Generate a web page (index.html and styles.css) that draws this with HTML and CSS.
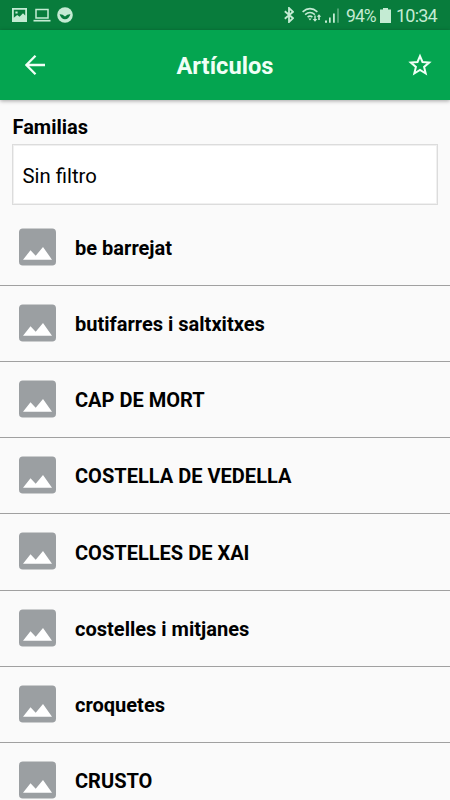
FILE: index.html
```html
<!DOCTYPE html>
<html lang="es">
<head>
<meta charset="utf-8">
<title>Artículos</title>
<link rel="stylesheet" href="styles.css">
</head>
<body>
<svg class="defs" width="0" height="0" aria-hidden="true">
  <symbol id="photo" viewBox="0 0 37 37">
    <rect width="37" height="37" rx="3.8" fill="#9b9fa2"/>
    <path d="M4 31.2 11.5 21.8 16.7 27.2 24 18.5 33 31.2Z" fill="#fff"/>
  </symbol>
</svg>
<header class="status">
  <div class="status-left">
    <svg width="15" height="14" viewBox="0 0 15 14"><path fill="currentColor" fill-rule="evenodd" d="M0 0H15V14H0ZM1.8 1.8V9.8L5.2 7 7.6 8.8 11 5.2 13.2 7.6V1.8ZM3.4 3.6H5.6V5.6H3.4Z"/></svg>
    <svg width="18" height="14" viewBox="0 0 18 14"><path d="M3 1.5H15V10H3Z" fill="none" stroke="currentColor" stroke-width="1.5"/><path d="M.5 12.7H17.5" stroke="currentColor" stroke-width="1.7"/></svg>
    <svg width="16" height="16" viewBox="0 0 16 16"><circle cx="8" cy="8" r="7.8" fill="currentColor"/><path d="M2.6 7.2Q5.4 6.9 8 9.4 10.6 6.9 13.4 7.2 11.8 12.2 8 12.2T2.6 7.2Z" fill="#087c3c"/></svg>
  </div>
  <div class="status-right">
    <svg class="bt" width="10" height="16" viewBox="0 0 10 16"><path d="M.8 4.2 9 11.2 5 15V1L9 4.8.8 11.8" fill="none" stroke="currentColor" stroke-width="1.8"/></svg>
    <svg class="wifi" width="20" height="16" viewBox="0 0 20 16"><g fill="none" stroke="currentColor" stroke-width="1.6"><path d="M.6 4.8Q8-1.7 15.4 4.8M3.1 7.6Q8 3.4 12.9 7.6M5.6 10.2Q8 8.2 10.4 10.2"/></g><path d="M6.4 11.6H9.6L8 13.5ZM12.3 8.5H13.7V12H15.3L13 14.7 10.7 12H12.3ZM16.2 13V9.7H14.8L17 7.2 19.2 9.7H17.8V13Z" fill="currentColor"/></svg>
    <svg class="signal" width="15" height="15" viewBox="0 0 15 15"><path d="M0 12.5H2V14.8H0ZM4 9.5H5.7V14.8H4ZM8 5.5H9.8V14.8H8Z" fill="currentColor"/><path d="M12.2 .5H13.8V14.8H12.2Z" fill="currentColor" opacity=".45"/></svg>
    <span class="percent">94%</span>
    <svg class="battery" width="11" height="15" viewBox="0 0 11 15"><path d="M3 0H8V1.6H11V15H0V1.6H3Z" fill="currentColor"/></svg>
    <span class="clock">10:34</span>
  </div>
</header>
<nav class="bar">
  <svg width="20" height="20" viewBox="0 0 20 20"><path d="M20 10H1.6M10.5.8 1.4 10 10.5 19.2" fill="none" stroke="currentColor" stroke-width="2.3"/></svg>
  <h1>Artículos</h1>
  <svg width="24" height="24" viewBox="0 0 24 23"><path d="M12 2.6 14.5 8.5 21.2 9.1 16.1 13.4 17.7 20 12 16.5 6.3 20 7.9 13.4 2.8 9.1 9.5 8.5Z" fill="none" stroke="currentColor" stroke-width="2"/></svg>
</nav>
<main>
  <section class="filter">
    <h2>Familias</h2>
    <div class="select">Sin filtro</div>
  </section>
  <ul class="list">
    <li><svg><use href="#photo"/></svg><span>be barrejat</span></li>
    <li><svg><use href="#photo"/></svg><span>butifarres i saltxitxes</span></li>
    <li><svg><use href="#photo"/></svg><span>CAP DE MORT</span></li>
    <li><svg><use href="#photo"/></svg><span>COSTELLA DE VEDELLA</span></li>
    <li><svg><use href="#photo"/></svg><span>COSTELLES DE XAI</span></li>
    <li><svg><use href="#photo"/></svg><span>costelles i mitjanes</span></li>
    <li><svg><use href="#photo"/></svg><span>croquetes</span></li>
    <li><svg><use href="#photo"/></svg><span>CRUSTO</span></li>
  </ul>
</main>
</body>
</html>
```
FILE: styles.css
```css
* { box-sizing: border-box; }
body {
  margin: 0;
  height: 800px;
  overflow: hidden;
  background: #fafafa;
  color: #000;
  font-family: Roboto, sans-serif;
  display: flex;
  flex-direction: column;
}
svg { display: block; flex: none; }
.defs { position: absolute; }
.status {
  height: 30px;
  flex: none;
  background: #087c3c;
  color: #c4ebd3;
  display: flex;
  justify-content: space-between;
  align-items: center;
  padding: 0 13px 0 12px;
}
.status-left { display: flex; align-items: center; gap: 6px; }
.status-right { display: flex; align-items: center; font-size: 18px; line-height: 30px; }
.bt { margin-left: 1px; }
.wifi { margin-left: 8px; }
.signal { margin-left: 3px; }
.percent { margin-left: 6px; width: 30px; font-size: 17.5px; letter-spacing: -.9px; padding-top: 1px; }
.battery { margin-left: 4px; }
.clock { margin-left: 5px; width: 41px; letter-spacing: -.8px; padding-top: 1px; }
.bar {
  height: 70px;
  flex: none;
  background: #04a550;
  color: #f0fff6;
  display: flex;
  align-items: center;
  justify-content: space-between;
  padding: 0 18px 0 25px;
  box-shadow: 0 1px 4px rgba(0, 0, 0, .35);
}
h1 { margin: 1px 3px 0 0; font-size: 23.7px; font-weight: 700; line-height: 30px; }
.filter { padding: 15px 12px 0; }
h2 { margin: 0; height: 29px; padding-left: .5px; font-size: 20px; line-height: 24px; font-weight: 700; }
.select {
  height: 61px;
  border: 1px solid #dcdcdc;
  box-shadow: inset 0 0 0 1px #f0f0f0;
  background: #fff;
  padding: 2px 9.5px 0;
  font-size: 20.3px;
  line-height: 58px;
}
.list { margin: 4.6px 0 0; padding: 0; list-style: none; }
.list li {
  height: 76.2px;
  border-bottom: 1px solid #a0a0a0;
  padding-left: 19px;
  display: flex;
  align-items: center;
  gap: 19px;
  font-size: 20.05px;
  font-weight: 700;
}
.list span { padding-top: 1.2px; }
.list svg { width: 37px; height: 38px; margin-top: -1px; }
```
